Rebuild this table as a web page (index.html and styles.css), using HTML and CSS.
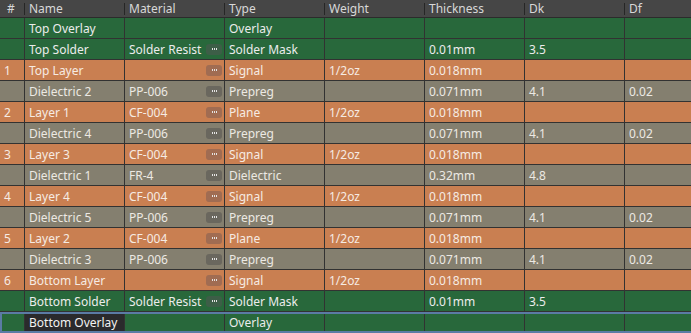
FILE: index.html
```html
<!DOCTYPE html>
<html>
<head>
<meta charset="utf-8">
<link rel="stylesheet" href="styles.css">
</head>
<body>
<div class="grid">
  <div class="row head">
    <div class="c num">#</div><div class="c">Name</div><div class="c">Material</div><div class="c">Type</div><div class="c">Weight</div><div class="c">Thickness</div><div class="c">Dk</div><div class="c last">Df</div>
  </div>
  <div class="row green">
    <div class="c num"></div><div class="c">Top Overlay</div><div class="c mat"></div><div class="c">Overlay</div><div class="c"></div><div class="c"></div><div class="c"></div><div class="c last"></div>
  </div>
  <div class="row green">
    <div class="c num"></div><div class="c">Top Solder</div><div class="c mat"><span>Solder Resist</span><i class="btn"><b></b><b></b><b></b></i></div><div class="c">Solder Mask</div><div class="c"></div><div class="c">0.01mm</div><div class="c">3.5</div><div class="c last"></div>
  </div>
  <div class="row orange">
    <div class="c num">1</div><div class="c">Top Layer</div><div class="c mat"><span></span><i class="btn"><b></b><b></b><b></b></i></div><div class="c">Signal</div><div class="c">1/2oz</div><div class="c">0.018mm</div><div class="c"></div><div class="c last"></div>
  </div>
  <div class="row gray">
    <div class="c num"></div><div class="c">Dielectric 2</div><div class="c mat"><span>PP-006</span><i class="btn"><b></b><b></b><b></b></i></div><div class="c">Prepreg</div><div class="c"></div><div class="c">0.071mm</div><div class="c">4.1</div><div class="c last">0.02</div>
  </div>
  <div class="row orange">
    <div class="c num">2</div><div class="c">Layer 1</div><div class="c mat"><span>CF-004</span><i class="btn"><b></b><b></b><b></b></i></div><div class="c">Plane</div><div class="c">1/2oz</div><div class="c">0.018mm</div><div class="c"></div><div class="c last"></div>
  </div>
  <div class="row gray">
    <div class="c num"></div><div class="c">Dielectric 4</div><div class="c mat"><span>PP-006</span><i class="btn"><b></b><b></b><b></b></i></div><div class="c">Prepreg</div><div class="c"></div><div class="c">0.071mm</div><div class="c">4.1</div><div class="c last">0.02</div>
  </div>
  <div class="row orange">
    <div class="c num">3</div><div class="c">Layer 3</div><div class="c mat"><span>CF-004</span><i class="btn"><b></b><b></b><b></b></i></div><div class="c">Signal</div><div class="c">1/2oz</div><div class="c">0.018mm</div><div class="c"></div><div class="c last"></div>
  </div>
  <div class="row gray">
    <div class="c num"></div><div class="c">Dielectric 1</div><div class="c mat"><span>FR-4</span><i class="btn"><b></b><b></b><b></b></i></div><div class="c">Dielectric</div><div class="c"></div><div class="c">0.32mm</div><div class="c">4.8</div><div class="c last"></div>
  </div>
  <div class="row orange">
    <div class="c num">4</div><div class="c">Layer 4</div><div class="c mat"><span>CF-004</span><i class="btn"><b></b><b></b><b></b></i></div><div class="c">Signal</div><div class="c">1/2oz</div><div class="c">0.018mm</div><div class="c"></div><div class="c last"></div>
  </div>
  <div class="row gray">
    <div class="c num"></div><div class="c">Dielectric 5</div><div class="c mat"><span>PP-006</span><i class="btn"><b></b><b></b><b></b></i></div><div class="c">Prepreg</div><div class="c"></div><div class="c">0.071mm</div><div class="c">4.1</div><div class="c last">0.02</div>
  </div>
  <div class="row orange">
    <div class="c num">5</div><div class="c">Layer 2</div><div class="c mat"><span>CF-004</span><i class="btn"><b></b><b></b><b></b></i></div><div class="c">Plane</div><div class="c">1/2oz</div><div class="c">0.018mm</div><div class="c"></div><div class="c last"></div>
  </div>
  <div class="row gray">
    <div class="c num"></div><div class="c">Dielectric 3</div><div class="c mat"><span>PP-006</span><i class="btn"><b></b><b></b><b></b></i></div><div class="c">Prepreg</div><div class="c"></div><div class="c">0.071mm</div><div class="c">4.1</div><div class="c last">0.02</div>
  </div>
  <div class="row orange">
    <div class="c num">6</div><div class="c">Bottom Layer</div><div class="c mat"><span></span><i class="btn"><b></b><b></b><b></b></i></div><div class="c">Signal</div><div class="c">1/2oz</div><div class="c">0.018mm</div><div class="c"></div><div class="c last"></div>
  </div>
  <div class="row green">
    <div class="c num"></div><div class="c">Bottom Solder</div><div class="c mat"><span>Solder Resist</span><i class="btn"><b></b><b></b><b></b></i></div><div class="c">Solder Mask</div><div class="c"></div><div class="c">0.01mm</div><div class="c">3.5</div><div class="c last"></div>
  </div>
  <div class="row green selected">
    <div class="c num"></div><div class="c edit">Bottom Overlay</div><div class="c mat"></div><div class="c">Overlay</div><div class="c"></div><div class="c"></div><div class="c"></div><div class="c last"></div>
  </div>
</div>
</body>
</html>
```
FILE: styles.css
```css
* { box-sizing: border-box; }
html, body {
  margin: 0;
  padding: 0;
  background: #2d2d2d;
  overflow: hidden;
}
.grid {
  width: 691px;
  font-family: "Noto Sans", "Open Sans", sans-serif;
  font-size: 12px;
  color: #ececec;
}
.row {
  display: flex;
  height: 21px;
  border-bottom: 1px solid #323232;
  position: relative;
}
.c {
  flex: 0 0 100px;
  border-right: 1px solid #323232;
  display: flex;
  align-items: center;
  padding-left: 4px;
  white-space: nowrap;
  overflow: hidden;
}
.c.num {
  flex: 0 0 25px;
  padding-left: 4px;
}
.c.last {
  flex: 1 1 auto;
  border-right: none;
}
.head {
  height: 18px;
  background: #464646;
  border-bottom: 1px solid #2b2b2b;
  color: #d8d8d8;
}
.head .c {
  border-right: none;
  position: relative;
}
.head .c::after {
  content: "";
  position: absolute;
  right: 0;
  top: 3px;
  bottom: 2px;
  width: 1px;
  background: #262626;
}
.head .c.last::after { display: none; }
.head .c.num { padding-left: 7px; }
.green { background: #28683b; }
.orange { background: #c97f51; color: #f6ebe3; }
.gray { background: #847f6f; color: #ece9e3; }
.mat {
  justify-content: space-between;
  padding-right: 2px;
}
.btn {
  width: 16px;
  height: 11px;
  border-radius: 3px;
  flex: 0 0 auto;
  display: flex;
  justify-content: center;
  align-items: center;
  gap: 1px;
  padding-bottom: 1px;
}
.btn b {
  width: 1px;
  height: 2px;
  background: #e4e4e4;
}
.green .btn { background: #3d5e47; }
.orange .btn { background: #a06c52; }
.gray .btn { background: #6a675e; }
.edit {
  background: #2a2a2c;
  color: #f2f2f2;
}
.selected::after {
  content: "";
  position: absolute;
  left: 0;
  right: 0;
  top: 0;
  bottom: -1px;
  border-top: 2px solid #5b7ba5;
  border-bottom: 2px solid #5b7ba5;
  border-left: 2px solid #5b7ba5;
  pointer-events: none;
}
```
